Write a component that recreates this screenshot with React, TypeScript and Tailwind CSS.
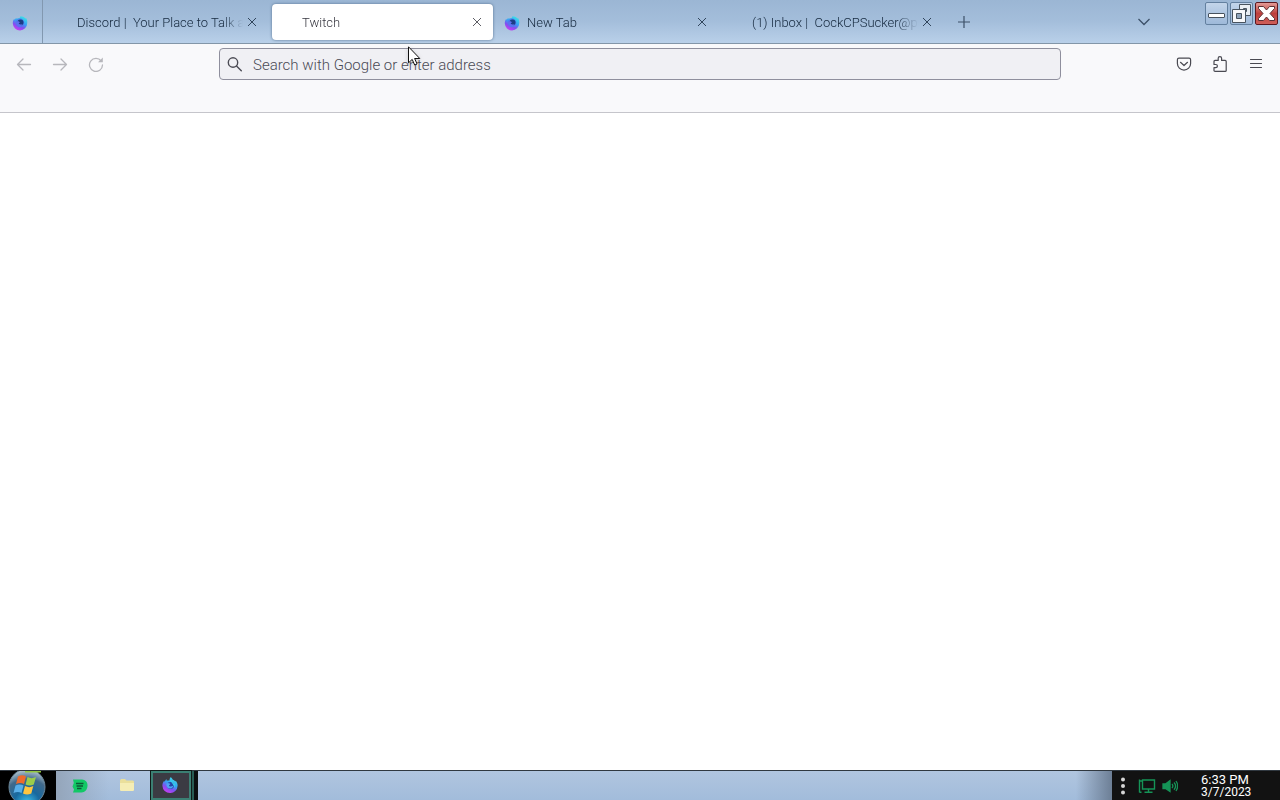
import { useState } from "react";

const tabs = [
  { title: "Discord |  Your Place to Talk a", icon: false },
  { title: "Twitch", icon: false },
  { title: "New Tab", icon: true },
  { title: "(1) Inbox |  CockCPSucker@p", icon: false },
];

const FoxIcon = ({ id, flame }: { id: string; flame?: boolean }) => (
  <svg viewBox="0 0 16 16" className="h-4 w-4 shrink-0" aria-hidden="true">
    <defs>
      <linearGradient id={id} x1="0.8" y1="0" x2="0.3" y2="1">
        <stop offset="0" stopColor="#3fe6e6" />
        <stop offset="0.45" stopColor="#36a0f4" />
        <stop offset="0.7" stopColor="#8050f0" />
        <stop offset="1" stopColor="#cc3df2" />
      </linearGradient>
    </defs>
    {flame ? (
      <>
        <path
          d="M8.800 0c1 1 1.600 1.800 2.100 2.800 1.300.4 1.900 1 2.400 1.700l.4-.7c1.200 1.400 2 3 1.900 5A7.400 7.400 0 0 1 8 16a7.600 7.600 0 0 1-7.600-7.300c0-2 .6-3.500 1.700-5l.5 1.100L4.300 2l.5 1.700c1.100-.3 1.800-.3 2.700-.2C7.400 2.200 7.800 1 8.800 0z"
          fill={`url(#${id})`}
        />
        <circle cx="8.500" cy="8.500" r="3.400" fill="#2645a8" />
        <path d="M4.500 6.500c1.200-1 2.300-.5 3.200-.1.900.4.600 1.300-.6 1.500-.4 1.500 1.700 2.300 4.200.8-.4 2-2 3-3.600 2.900-2.200-.1-3.700-2-3.200-5.100z" fill="#4fa5f5" />
        <path d="M8 3c2 .8 3 2 3.200 3.800.4-.3.500-.8.500-1.200 1.300 1.500 1.500 3.600.4 5.200.2-2.800-2.100-4.300-4.100-7.800z" fill="#35d5ee" />
      </>
    ) : (
      <>
        <path
          d="M8.500 1.200c2 .1 3.800.8 5 2.200l.6-.3c.9 1.600 1.400 3.300 1.100 5.200A7.100 7.100 0 0 1 8 15.400 7.200 7.200 0 0 1 .8 8.500c0-1.700.3-3 1.300-4.400l.7.6L4 2.900l.8.800c1-.5 2-.5 2.700-.4z"
          fill={`url(#${id})`}
        />
        <circle cx="8" cy="7.800" r="4.200" fill="#4a7fee" />
        <circle cx="8.500" cy="7.500" r="3" fill="#1c3c86" />
        <path d="M4.300 6.800c1-.8 2.200-.5 3-.1.800.4.500 1.200-.5 1.400-.2 1.200 1.700 1.800 3.800.8-.6 1.800-2 2.600-3.300 2.500-2-.2-3.300-2-3-4.600z" fill="#5d6ff0" />
      </>
    )}
  </svg>
);

const CloseIcon = () => (
  <svg viewBox="0 0 10 10" className="h-[10px] w-[10px]" fill="none" stroke="currentColor" aria-hidden="true">
    <path d="M1 1l8 8M9 1L1 9" />
  </svg>
);

const TabStrip = () => {
  const [active, setActive] = useState(1);

  return (
    <header className="flex h-11 border-b border-[#8396a8] bg-linear-to-b from-[#9bb6d4] via-[#a4bedb] to-[#b9d0e9]">
      <button aria-label="Pinned tab" className="flex w-[43px] shrink-0 items-center justify-center border-r border-[#8298b0] pt-[2px] pr-[2px]">
        <FoxIcon id="fox-pinned" />
      </button>
      <nav aria-label="Tabs" className="flex min-w-0 flex-1 pl-[2px]">
        {tabs.map((tab, i) => (
          <div key={tab.title} className="flex w-[225px] min-w-0 px-[2px] pt-1 pb-[3px]">
            <div
              className={`flex w-full min-w-0 items-center rounded-sm pr-[11px] pl-[7px] ${
                active === i ? "bg-white text-[#36363f] shadow-[0_0_3px_#53708f]" : "text-[#14273c]"
              }`}
            >
              <button onClick={() => setActive(i)} className="flex min-w-0 flex-1 items-center pt-[2px]">
                {tab.icon ? <FoxIcon id={`fox-${i}`} /> : <span className="w-4 shrink-0"></span>}
                <span className="ml-[7px] min-w-0 flex-1 overflow-hidden text-left text-[13px] leading-5 whitespace-pre [mask-image:linear-gradient(to_right,black_calc(100%-20px),transparent)]">
                  {tab.title}
                </span>
              </button>
              <button aria-label={`Close ${tab.title}`} className="ml-1 opacity-80">
                <CloseIcon />
              </button>
            </div>
          </div>
        ))}
        <button aria-label="Open a new tab" className="flex w-[38px] shrink-0 items-center justify-center pt-px text-[#3c5068]">
          <svg viewBox="0 0 12 12" className="h-3 w-3" stroke="currentColor" strokeWidth="1.200">
            <path d="M6 0v12M0 6h12" />
          </svg>
        </button>
      </nav>
      <button aria-label="List all tabs" className="mr-[43px] flex w-9 shrink-0 items-center justify-center text-[#3c5068]">
        <svg viewBox="0 0 12 8" className="h-2 w-3" fill="none" stroke="currentColor" strokeWidth="1.300">
          <path d="M.5 1l5.500 5.500L11.500 1" />
        </svg>
      </button>
      <div className="flex shrink-0 items-start gap-[2px] pt-[2px] pr-[2px]">
        <button aria-label="Minimize" className="h-[23px] w-[23px] rounded-xs border border-[#63809f] bg-linear-to-b from-[#c3d5ea] to-[#9eb9d9]">
          <svg viewBox="0 0 21 21" className="h-full w-full">
            <rect x="2.500" y="10.500" width="16" height="4" rx="0.500" fill="#fff" stroke="#48535e" />
          </svg>
        </button>
        <button aria-label="Restore" className="h-[23px] w-[23px] rounded-xs border border-[#63809f] bg-linear-to-b from-[#c3d5ea] to-[#9eb9d9]">
          <svg viewBox="0 0 21 21" className="h-full w-full" stroke="#48535e">
            <path d="M8.500 1.500h11v11h-11z" fill="#e9eef3" />
            <path d="M12.500 5.500h3v3h-3z" fill="#90a4ba" />
            <path d="M1.500 6.500h13v13h-13z" fill="#f7f8fa" />
            <path d="M5.500 10.500h5v5h-5z" fill="#90a4ba" />
          </svg>
        </button>
        <button aria-label="Close window" className="h-[23px] w-[23px] rounded-xs border border-[#5c1820] bg-linear-to-b from-[#e39a97] via-[#bd3f3d] to-[#cf5f59]">
          <svg viewBox="0 0 21 21" className="h-full w-full">
            <path d="M2.500 3.500h5l3 3.500 3-3.500h5v2L14 10.500l4.500 5v2h-5l-3-3.500-3 3.500h-5v-2l4.500-5-4.500-5z" fill="#fff" stroke="#5b3034" />
          </svg>
        </button>
      </div>
    </header>
  );
};

const Toolbar = () => (
  <div className="h-[69px] border-b border-[#c5c5cb] bg-[#f9f9fb] pt-1">
    <div className="flex h-8 items-center px-[6px]">
      <div className="flex text-[#b7b7bc]">
        <button aria-label="Back" className="flex h-8 w-9 items-center justify-center">
          <svg viewBox="0 0 16 16" className="h-4 w-4" fill="none" stroke="currentColor" strokeWidth="1.300" strokeLinecap="round" strokeLinejoin="round">
            <path d="M14.500 8.500h-13M7 3L1.500 8.500 7 14" />
          </svg>
        </button>
        <button aria-label="Forward" className="flex h-8 w-9 items-center justify-center">
          <svg viewBox="0 0 16 16" className="h-4 w-4" fill="none" stroke="currentColor" strokeWidth="1.300" strokeLinecap="round" strokeLinejoin="round">
            <path d="M1.500 8.500h13M9 3l5.500 5.500L9 14" />
          </svg>
        </button>
        <button aria-label="Reload" className="flex h-8 w-9 items-center justify-center">
          <svg viewBox="0 0 16 16" className="h-4 w-4" fill="none" stroke="currentColor" strokeWidth="1.300" strokeLinecap="round">
            <path d="M13.200 5A6.500 6.500 0 1 0 14.500 9" />
            <path d="M14.800 1.500v4.800H10z" fill="currentColor" stroke="none" />
          </svg>
        </button>
      </div>
      <label className="mx-[105px] flex h-8 min-w-0 flex-1 items-center rounded-sm border border-[#8f8f9d] bg-[#f0f0f4] pl-[7px] text-[#4c4c55]">
        <svg viewBox="0 0 16 16" className="h-4 w-4 shrink-0" fill="none" stroke="currentColor" strokeWidth="1.400" strokeLinecap="round">
          <circle cx="6" cy="6.500" r="4.700" />
          <path d="M9.500 10l4.800 4.800" />
        </svg>
        <input
          type="text"
          aria-label="Search with Google or enter address"
          placeholder="Search with Google or enter address"
          className="ml-[10px] min-w-0 flex-1 bg-transparent pt-[2px] text-[15px] outline-none placeholder:text-[#4a4a54]"
        />
      </label>
      <div className="flex text-[#4a4a52]">
        <button aria-label="Save to Pocket" className="flex h-8 w-9 items-center justify-center">
          <svg viewBox="0 0 16 16" className="h-4 w-4" fill="none" stroke="currentColor" strokeWidth="1.200" strokeLinecap="round" strokeLinejoin="round">
            <path d="M3 2.200h10A1.600 1.600 0 0 1 14.600 3.800V7.500a6.600 6.600 0 0 1-13.200 0V3.800A1.600 1.600 0 0 1 3 2.200z" />
            <path d="M4.500 6.300L8 9.500l3.500-3.200" />
          </svg>
        </button>
        <button aria-label="Extensions" className="flex h-8 w-9 items-center justify-center">
          <svg viewBox="0 0 16 16" className="h-4 w-4" fill="none" stroke="currentColor" strokeWidth="1.200" strokeLinejoin="round">
            <path d="M3 4.400h3.200V2.300a1.700 1.700 0 0 1 3.400 0v2.100h3.600a1 1 0 0 1 1 1v9a1 1 0 0 1-1 1H3a1 1 0 0 1-1-1v-2.700h1.800a1.600 1.600 0 0 0 0-3.200H2V5.400a1 1 0 0 1 1-1z" />
          </svg>
        </button>
        <button aria-label="Open application menu" className="flex h-8 w-9 items-center justify-center">
          <svg viewBox="0 0 16 16" className="h-4 w-4" stroke="currentColor" strokeWidth="1.200" strokeLinecap="round">
            <path d="M2.500 3.500h11M2.500 7.500h11M2.500 11.500h11" />
          </svg>
        </button>
      </div>
    </div>
  </div>
);

const StartOrb = () => (
  <svg viewBox="0 0 40 29" className="h-[29px] w-10" aria-hidden="true">
    <defs>
      <radialGradient id="orb" cx="0.5" cy="0.95" r="0.9">
        <stop offset="0" stopColor="#3fc4ef" />
        <stop offset="0.4" stopColor="#17699f" />
        <stop offset="0.75" stopColor="#41698a" />
        <stop offset="1" stopColor="#a9bdca" />
      </radialGradient>
    </defs>
    <circle cx="20" cy="16" r="18" fill="url(#orb)" stroke="#6c8798" />
    <path d="M18 0h16v1.500H18z" fill="#93c83d" />
    <path d="M11 5.500c3-1.800 5.500-1.500 8 0l-2 7.500c-2.500-1.500-5-1.500-8 0z" fill="#ee6a2c" />
    <path d="M20.500 6c2.800 1.500 5.500 1.500 8.500 0l-2.200 7.500c-3 1.500-5.600 1.300-8.200 0z" fill="#9ccd4a" />
    <path d="M8.500 14.500c3-1.500 5.500-1.500 8 0l-2 7.500c-2.500-1.500-5-1.500-8 0z" fill="#58aee8" />
    <path d="M18 15c2.800 1.500 5.500 1.500 8.300 0l-2 7.500c-3 1.500-5.700 1.300-8.300 0z" fill="#ffc540" />
  </svg>
);

const Taskbar = () => (
  <footer className="flex h-[30px] shrink-0 border-t border-[#303840] bg-linear-to-b from-[#b0c5df] to-[#a2bcdb]">
    <button aria-label="Start" className="flex w-14 shrink-0 items-start bg-black pl-[7px]">
      <StartOrb />
    </button>
    <div className="flex min-w-0 flex-1 bg-linear-to-r from-[#94a5ba] via-transparent via-5% to-transparent">
      <button aria-label="Spotify" className="flex w-12 items-center justify-center">
        <svg viewBox="0 0 16 16" className="h-4 w-4">
          <path d="M1 1.500h9a5.500 5.500 0 0 1 5.500 6c0 4-2.500 7-6 7H1l1-3-1.500-3L1.800 5z" fill="#12c866" />
          <path d="M4 5.500h7.500M4.500 8h6.500M5 10.500h4.500" stroke="#0b5a35" strokeWidth="1.300" />
        </svg>
      </button>
      <button aria-label="Files" className="flex w-[47px] items-center justify-center pr-px pb-[2px]">
        <svg viewBox="0 0 16 14" className="h-[14px] w-4">
          <path d="M1 2.500L2 1h4l1.500 1.500H14l1 1V12l-1 1H2l-1-1z" fill="#eadf9b" />
          <path d="M1 5h14v7l-1 1H2l-1-1z" fill="#f5edb5" />
        </svg>
      </button>
      <button aria-label="Firefox" className="flex w-[47px] border-r-4 border-[#0b0f10] bg-[#285c54]">
        <span className="flex h-full w-10 items-center justify-center border-2 border-[#3b7f73] bg-[#3b3b43] pr-[2px] pb-[2px] outline outline-[#111a19]">
          <FoxIcon id="fox-task" flame />
        </span>
      </button>
      <div className="ml-auto w-9 bg-linear-to-r from-transparent to-[#6d7f96]"></div>
    </div>
    <div className="flex shrink-0 items-center bg-[#121212]">
      <button aria-label="Show hidden icons" className="flex h-full w-[22px] items-center justify-center">
        <svg viewBox="0 0 6 20" className="h-5 w-[6px]" fill="#d6d6d6">
          <circle cx="3" cy="3.500" r="2" />
          <circle cx="3" cy="10" r="2" />
          <circle cx="3" cy="16.500" r="2" />
        </svg>
      </button>
      <button aria-label="Network" className="ml-1">
        <svg viewBox="0 0 18 16" className="h-4 w-[18px]" fill="none" stroke="#159457" strokeWidth="1.400">
          <path d="M4.500 2h12v9h-12zM10.500 11v3M6.500 14.300h8M1.500 1.500v13M1 3h3.500M1.500 14.300h2" />
        </svg>
      </button>
      <button aria-label="Volume" className="ml-[6px]">
        <svg viewBox="0 0 16 16" className="h-4 w-4" fill="none" stroke="#159457" strokeWidth="1.300">
          <path d="M1 6h2.500L8 2.500v11L3.500 10.500H1z" fill="#159457" />
          <path d="M10 6c1 1.200 1 3 0 4.200M12 4.500c2 2.200 2 5 0 7.200M14 3c2 3 2 7 0 10" />
        </svg>
      </button>
      <div className="ml-5 w-[82px] pt-px pl-[3px] text-[13px] leading-[13px] font-normal text-white">
        <div>6:33 PM</div>
        <div className="text-xs leading-[13px]">3/7/2023</div>
      </div>
    </div>
  </footer>
);

export default function App() {
  return (
    <div className="relative flex min-h-screen flex-col bg-white font-['Roboto',sans-serif] font-light">
      <TabStrip />
      <Toolbar />
      <main className="flex-1 bg-white"></main>
      <Taskbar />
      <svg viewBox="0 0 13 20" className="pointer-events-none absolute top-[46px] left-[408px] h-5 w-[13px] drop-shadow-sm" aria-hidden="true">
        <path d="M.5.800v16l3.700-3.400 2.500 5.600 2.400-1-2.500-5.500h5.200z" fill="#fff" stroke="#111" />
      </svg>
    </div>
  );
}
